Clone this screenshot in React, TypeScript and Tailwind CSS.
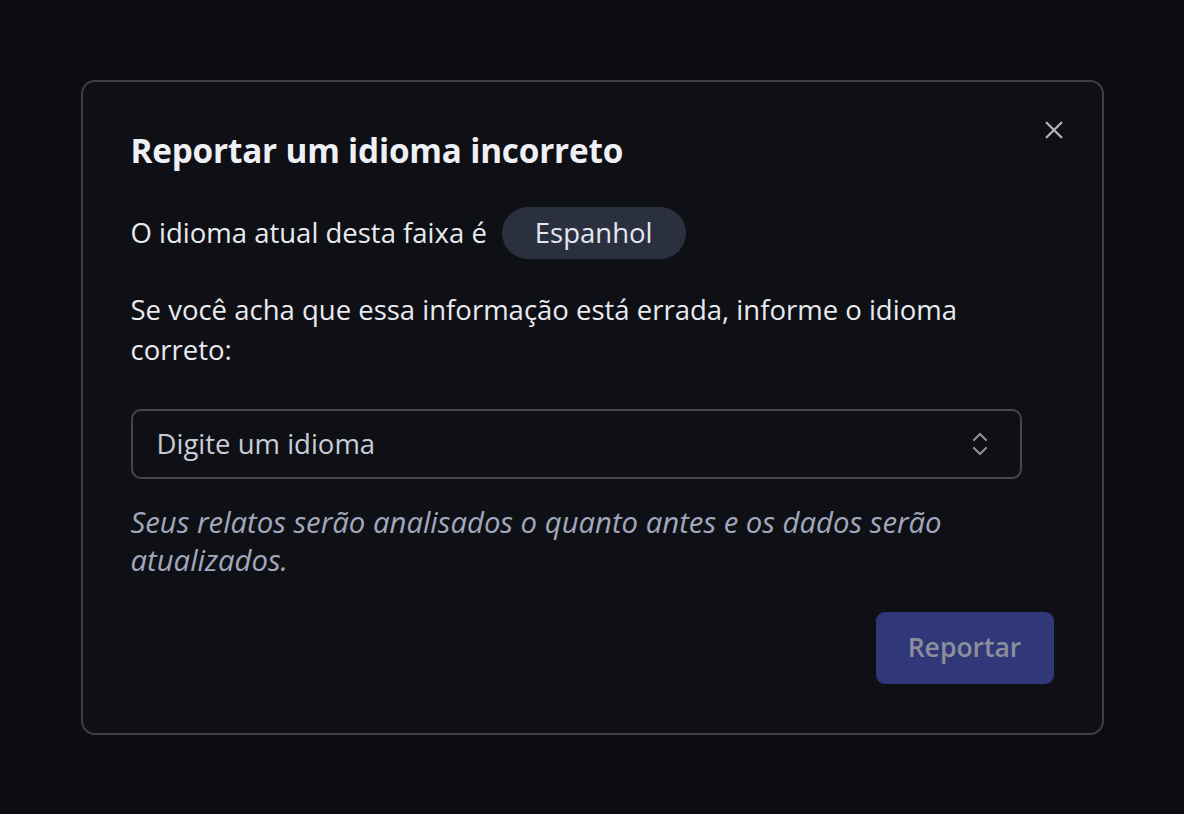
import React from 'react';

export default function App() {
    return (
        <div className="min-h-[814px] w-full bg-[#0c0d11] flex items-start justify-center pt-[80px] font-['Open_Sans',sans-serif]">
            <div className="relative w-[1023px] bg-[#0f1015] border-2 border-[#3d3f47] rounded-[14px] px-[48px] pt-[44px] pb-[49px]">
                {/* Close */}
                <button className="absolute right-[37px] top-[37px] w-[22px] h-[22px] text-[#b4b6bd] flex items-center justify-center">
                    <svg width="22" height="22" viewBox="0 0 24 24" fill="none" stroke="currentColor" strokeWidth="2.4" strokeLinecap="round">
                        <path d="M4 4l16 16M20 4L4 20" />
                    </svg>
                </button>

                <h2 className="text-[33.3px] leading-[48px] font-bold text-[#eef0f5] tracking-[-0.2px]">Reportar um idioma incorreto</h2>

                <div className="mt-[33px] flex items-center gap-[15px] text-[27.5px] text-[#e9eaef]">
                    <span>O idioma atual desta faixa é</span>
                    <span className="h-[52px] px-[33px] rounded-full bg-[#2b303e] flex items-center text-[#e4e7f2]">Espanhol</span>
                </div>

                <p className="mt-[31px] text-[27.5px] leading-[40px] text-[#e9eaef] max-w-[880px]">
                    Se você acha que essa informação está errada, informe o idioma correto:
                </p>

                <div className="mt-[39px] w-[891px] h-[70px] border-2 border-[#44464f] rounded-[10px] flex items-center justify-between pl-[24px] pr-[28px]">
                    <span className="text-[27.5px] text-[#c9ccd8]">Digite um idioma</span>
                    <svg width="24" height="28" viewBox="0 0 24 28" fill="none" stroke="#8d9099" strokeWidth="2.2" strokeLinecap="round" strokeLinejoin="round">
                        <path d="M6 10l6-6 6 6M6 18l6 6 6-6" />
                    </svg>
                </div>

                <p className="mt-[24px] text-[29.3px] leading-[38px] italic text-[#a3a7bd] max-w-[880px]">
                    Seus relatos serão analisados o quanto antes e os dados serão atualizados.
                </p>

                <div className="mt-[33px] flex justify-end">
                    <button className="w-[178px] h-[72px] rounded-[9px] bg-[#30387a] text-[26.5px] font-semibold text-[#8b8f9b]">Reportar</button>
                </div>
            </div>
        </div>
    );
}
